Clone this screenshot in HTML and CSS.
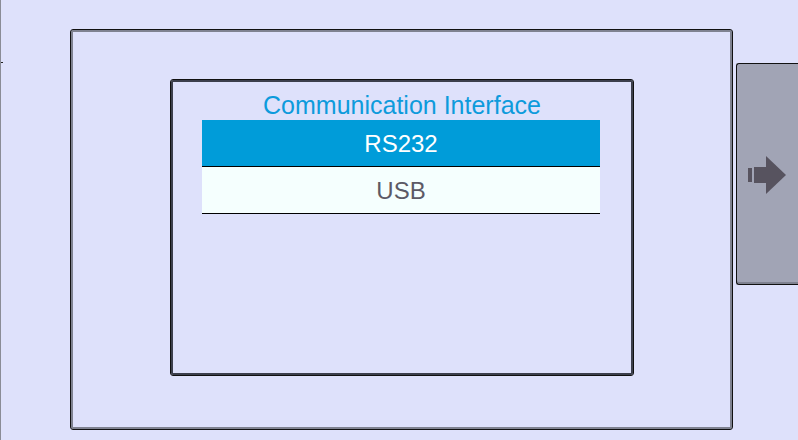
FILE: index.html
```html
<!DOCTYPE html>
<html>
<head>
<meta charset="utf-8">
<link rel="stylesheet" href="styles.css">
</head>
<body>
<div class="screen">
  <div class="outer">
    <div class="inner">
      <div class="title">Communication Interface</div>
      <div class="list">
        <div class="row selected">RS232</div>
        <div class="row">USB</div>
      </div>
    </div>
  </div>
  <div class="next">
    <svg class="arrow" width="38" height="38" viewBox="0 0 38 38">
      <rect x="0" y="12" width="4" height="14" fill="#57535f"/>
      <rect x="6" y="11" width="13" height="16" fill="#57535f"/>
      <polygon points="18,0 38,19 18,38" fill="#57535f"/>
    </svg>
  </div>
</div>
</body>
</html>
```
FILE: styles.css
```css
html, body {
  margin: 0;
  padding: 0;
}
body {
  width: 798px;
  height: 440px;
  overflow: hidden;
  background: #dee1fb;
  font-family: "Liberation Sans", Arial, sans-serif;
}
.screen {
  position: relative;
  display: flex;
  align-items: flex-start;
  height: 440px;
  box-sizing: border-box;
  border-left: 1px solid #8a8c96;
}
.screen::after {
  content: "";
  position: absolute;
  left: 0;
  top: 62px;
  width: 2px;
  height: 1px;
  background: #222;
}
.outer {
  flex: none;
  box-sizing: border-box;
  margin: 29px 0 0 69px;
  width: 663px;
  height: 401px;
  border: 1px solid #111;
  border-radius: 3px;
  box-shadow: inset 0 0 0 2px #7f8290;
  padding: 49px 0 0 99px;
}
.inner {
  box-sizing: border-box;
  width: 464px;
  height: 297px;
  border: 1px solid #111;
  border-radius: 3px;
  box-shadow: inset 0 0 0 2px #3c3f4c;
  padding-top: 12px;
}
.title {
  text-align: center;
  color: #0d9bdc;
  font-size: 25px;
  line-height: 26px;
  height: 26px;
}
.list {
  margin: 2px 0 0 31px;
  width: 398px;
}
.row {
  height: 44px;
  padding-top: 2px;
  line-height: 44px;
  font-size: 24px;
  text-align: center;
  background: #f5fffe;
  color: #5c5a66;
  border-bottom: 1px solid #000;
}
.row.selected {
  background: #009cd9;
  color: #ffffff;
}
.next {
  flex: none;
  box-sizing: border-box;
  margin: 63px 0 0 3px;
  width: 64px;
  height: 222px;
  background: #a1a4b5;
  border-top: 1px solid #111;
  border-left: 1px solid #111;
  border-bottom: 1px solid #111;
  border-radius: 3px 0 0 3px;
  box-shadow: inset 0 -2px 0 #7f8290;
  padding: 92px 0 0 11px;
}
.arrow {
  display: block;
}
```
